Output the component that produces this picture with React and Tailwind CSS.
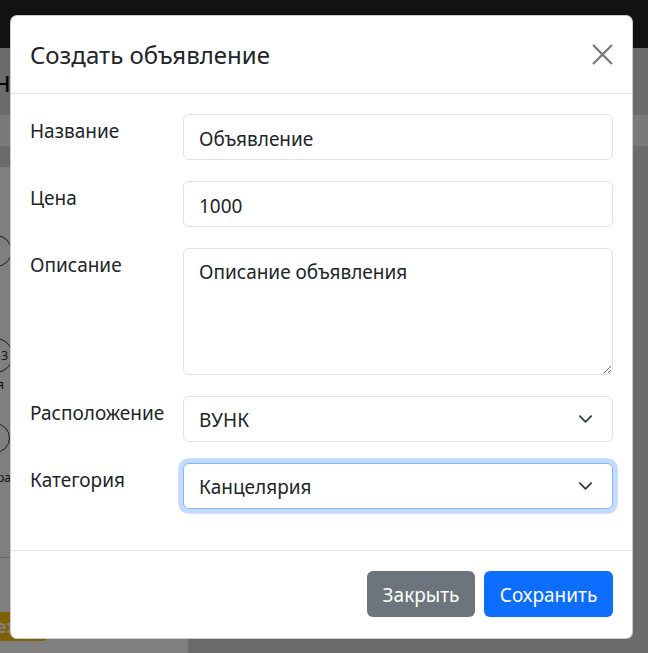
const font = { fontFamily: '"Noto Sans", "Open Sans", sans-serif' };

function Chevron() {
  return (
    <svg
      viewBox="0 0 16 16"
      className="pointer-events-none absolute right-[20px] top-1/2 h-[15px] w-[15px] -translate-y-1/2"
      fill="none"
      stroke="#343a40"
      strokeWidth="2"
      strokeLinecap="round"
      strokeLinejoin="round"
    >
      <path d="M2 5l6 6 6-6" />
    </svg>
  );
}

function CloseIcon() {
  return (
    <svg viewBox="0 0 20 20" className="h-[21px] w-[21px]" fill="none" stroke="#7a7a7a" strokeWidth="2.2">
      <path d="M1 1l18 18M19 1L1 19" />
    </svg>
  );
}

function Row({ label, children }) {
  return (
    <div className="grid grid-cols-[153px_1fr]">
      <label className="pt-[2px] text-[19px] leading-[30px] text-[#212529]">{label}</label>
      {children}
    </div>
  );
}

const inputCls =
  "h-[46px] w-full rounded-[6px] border border-[#dee2e6] bg-white px-[15px] pt-[3px] text-[19px] text-[#212529] outline-none";

export default function App() {
  return (
    <div className="relative h-[653px] w-[648px] overflow-hidden bg-[#d6d6d6]" style={font}>
      {/* page behind the modal */}
      <div className="h-[48px] bg-[#222428]" />
      <div className="h-[67px] pt-[24px]">
        <span className="-ml-[6px] text-[22px] font-medium leading-none text-black">Н</span>
      </div>
      <div className="h-[31px] bg-[#f5f5f5]" />
      <div className="h-[21px]" />
      <div className="flex h-[486px]">
        <div className="flex w-[188px] flex-col bg-white">
          <div className="flex h-[390px] flex-col pt-[68px]">
            <div className="-ml-[20px] h-[32px] w-[32px] rounded-full border border-[#333]" />
            <div className="-ml-[22px] mt-[71px] flex h-[35px] w-[35px] items-center justify-end rounded-full border border-[#333] pr-[4px] text-[12px] text-[#222]">3</div>
            <span className="-ml-[3px] mt-[4px] text-[12px] leading-[16px] text-[#222]">я</span>
            <div className="-ml-[20px] mt-[30px] h-[30px] w-[30px] rounded-full border border-[#333]" />
            <span className="-ml-[3px] mt-[17px] text-[12px] leading-[16px] text-[#222]">ра</span>
          </div>
          <div className="border-t border-[#ccc]" />
          <div className="mt-[54px] flex h-[29px] w-[50px] items-center rounded-br-[8px] bg-[#ffc107] text-[18px] font-bold text-white">
            <span className="-ml-[4px]">ex</span>
          </div>
        </div>
        <div className="flex-1" />
      </div>

      {/* backdrop */}
      <div className="absolute inset-0 bg-black/50" />

      {/* modal */}
      <div className="absolute left-[10px] top-[15px] flex w-[623px] flex-col rounded-[7px] border border-black/20 bg-white">
        <div className="flex h-[78px] items-center justify-between border-b border-[#dee2e6] pl-[19px] pr-[18px]">
          <h5 className="text-[24px] font-normal leading-[36px] text-[#212529]">Создать объявление</h5>
          <button className="flex h-[24px] w-[24px] items-center justify-center">
            <CloseIcon />
          </button>
        </div>

        <div className="flex flex-col gap-[21px] px-[19px] pb-[41px] pt-[20px]">
          <Row label="Название">
            <input className={inputCls} defaultValue="Объявление" style={font} />
          </Row>
          <Row label="Цена">
            <input className={inputCls} defaultValue="1000" style={font} />
          </Row>
          <Row label="Описание">
            <textarea
              className="h-[127px] w-full rounded-[6px] border border-[#dee2e6] bg-white px-[15px] pb-[7px] pt-[9px] text-[19px] leading-[29px] text-[#212529] outline-none"
              defaultValue="Описание объявления"
              style={font}
            />
          </Row>
          <Row label="Расположение">
            <div className="relative">
              <select className={inputCls + " appearance-none"} defaultValue="ВУНК" style={font}>
                <option>ВУНК</option>
              </select>
              <Chevron />
            </div>
          </Row>
          <Row label="Категория">
            <div className="relative">
              <select
                className="h-[46px] w-full appearance-none rounded-[6px] border border-[#86b7fe] bg-white px-[15px] pt-[3px] text-[19px] text-[#212529] shadow-[0_0_0_4.8px_rgba(13,110,253,0.25)] outline-none"
                defaultValue="Канцелярия"
                style={font}
              >
                <option>Канцелярия</option>
              </select>
              <Chevron />
            </div>
          </Row>
        </div>

        <div className="flex h-[88px] items-center justify-end gap-[9px] border-t border-[#dee2e6] px-[19px] pb-[1px]">
          <button className="h-[46px] w-[108px] rounded-[6px] bg-[#6c757d] pt-[2px] text-[19px] text-white">Закрыть</button>
          <button className="h-[46px] w-[129px] rounded-[6px] bg-[#0d6efd] pt-[2px] text-[19px] text-white">Сохранить</button>
        </div>
      </div>
    </div>
  );
}
